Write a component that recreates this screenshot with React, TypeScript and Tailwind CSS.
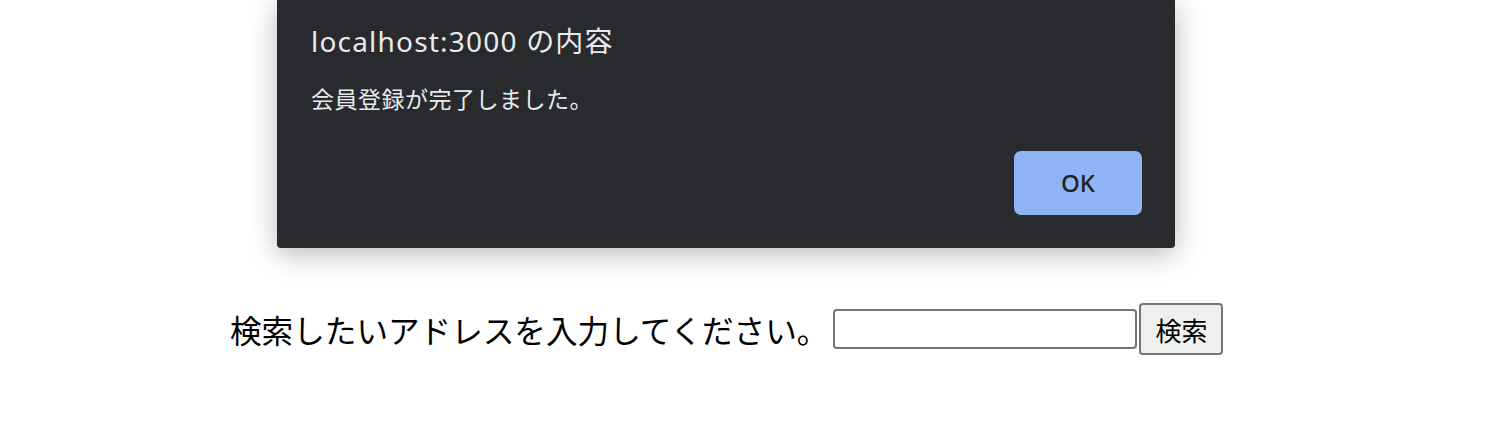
import React from 'react';

const jp = { fontFamily: '"Noto Sans", "Noto Sans CJK JP", sans-serif' };

const AlertDialog: React.FC = () => (
  <div
    className="absolute left-[277px] top-0 w-[898px] h-[248px] rounded-b-[4px] bg-[#292a2e] shadow-[0_6px_28px_rgba(0,0,0,0.28)]"
    style={jp}
  >
    <div className="pl-[34px] pt-[21px]">
      <div className="text-[28px] leading-[40px] tracking-[1.2px] text-[#e8eaed]">localhost:3000 の内容</div>
      <div className="mt-[22px] text-[23px] leading-[32px] tracking-[0.5px] text-[#e8eaed]">会員登録が完了しました。</div>
    </div>
    <div className="absolute right-[33px] bottom-[33px]">
      <button className="w-[128px] h-[64px] rounded-[7px] bg-[#8fb3f4] text-[24px] font-medium text-[#202124]">
        OK
      </button>
    </div>
  </div>
);

export default function App() {
  return (
    <div className="relative w-[1490px] h-[436px] bg-white overflow-hidden">
      <AlertDialog />
      <div className="flex items-center pl-[230px] pt-[303px]" style={{ fontFamily: '"Noto Sans CJK JP", sans-serif' }}>
        <span className="text-[31.6px] leading-[52px] text-black">検索したいアドレスを入力してください。</span>
        <input
          type="text"
          className="ml-[5px] w-[304px] h-[40px] rounded-[4px] border-2 border-[#767676] bg-white"
        />
        <button className="ml-[2px] w-[84px] h-[52px] rounded-[4px] border-2 border-[#767676] bg-[#efefef] text-[26px] text-black">
          検索
        </button>
      </div>
    </div>
  );
}
